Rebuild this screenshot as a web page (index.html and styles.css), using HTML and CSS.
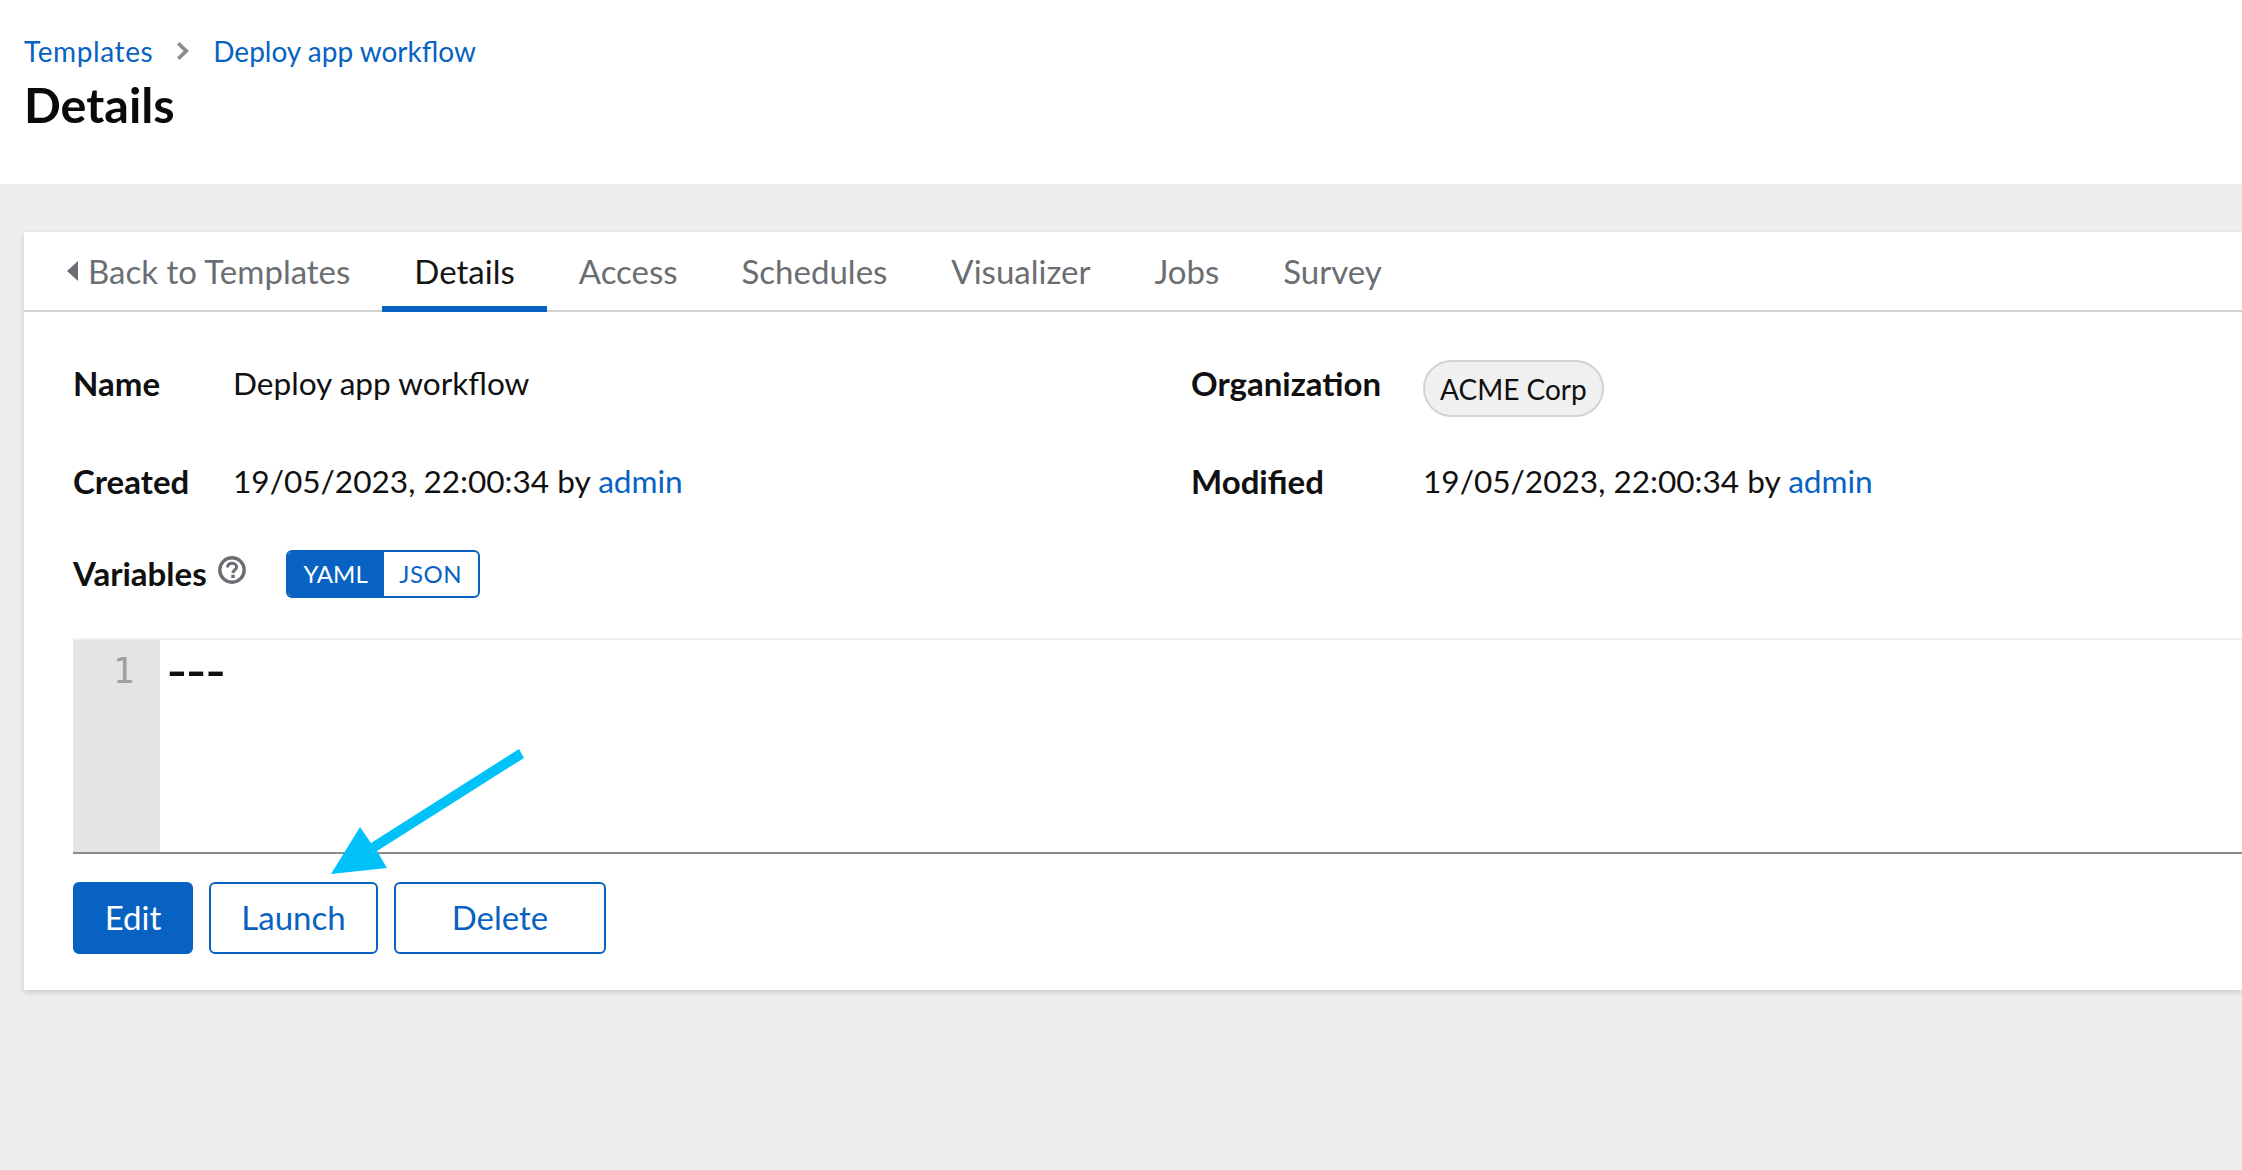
FILE: index.html
```html
<!DOCTYPE html>
<html lang="en">
<head>
    <meta charset="UTF-8">
    <meta name="viewport" content="width=device-width, initial-scale=1.0">
    <title>Details</title>
    <link rel="stylesheet" href="styles.css">
</head>
<body>
    <header class="pageHeader">
        <nav class="crumbs">
            <a class="firstCrumb" href="#">Templates</a>
            <svg class="crumbSep" viewBox="0 0 12 18" width="12" height="18"><path d="M2.5 0 L12 9 L2.5 18 L0 15.4 L6.6 9 L0 2.6 Z" fill="#8a8d90"/></svg>
            <a href="#">Deploy app workflow</a>
        </nav>
        <h1>Details</h1>
    </header>

    <main class="pageMain">
        <section class="card">
            <div class="tabs">
                <a class="tab backTab" href="#"><svg viewBox="0 0 11 20" width="11" height="20"><path d="M11 0 V20 L0 10 Z" fill="#6a6e73"/></svg>Back to Templates</a>
                <a class="tab active" href="#">Details</a>
                <a class="tab" href="#">Access</a>
                <a class="tab" href="#">Schedules</a>
                <a class="tab" href="#">Visualizer</a>
                <a class="tab" href="#">Jobs</a>
                <a class="tab" href="#">Survey</a>
            </div>

            <div class="cardBody">
                <div class="detailGrid">
                    <div class="label">Name</div>
                    <div class="value">Deploy app workflow</div>
                    <div class="label">Organization</div>
                    <div class="value"><span class="chip">ACME Corp</span></div>
                    <div class="label">Created</div>
                    <div class="value">19/05/2023, 22:00:34 by <a href="#">admin</a></div>
                    <div class="label">Modified</div>
                    <div class="value">19/05/2023, 22:00:34 by <a href="#">admin</a></div>
                </div>

                <div class="varsRow">
                    <span class="label">Variables</span>
                    <svg class="helpIcon" viewBox="0 0 28 28" width="28" height="28">
                        <circle cx="14" cy="14" r="12.2" fill="none" stroke="#6a6e73" stroke-width="3.4"/>
                        <path d="M9.6 11.4 C9.6 8.6 11.5 7.2 14 7.2 C16.8 7.2 18.6 8.8 18.6 11 C18.6 14 15 14 15 17" fill="none" stroke="#6a6e73" stroke-width="3"/>
                        <rect x="13.3" y="18.6" width="3.4" height="3.4" fill="#6a6e73"/>
                    </svg>
                    <div class="toggle">
                        <span class="toggleOn">YAML</span>
                        <span class="toggleOff">JSON</span>
                    </div>
                </div>

                <div class="editor">
                    <div class="gutter">1</div>
                    <div class="code">---</div>
                </div>

                <div class="actions">
                    <button class="btn primary editBtn">Edit</button>
                    <button class="btn launchBtn">Launch</button>
                    <button class="btn deleteBtn">Delete</button>
                </div>
            </div>

            <svg class="arrow" viewBox="0 0 200 130" width="200" height="130">
                <path d="M195 0 L200 9 L53 102 L63 119 L7 125 L36 78 L47 94 Z" fill="#00c2f9"/>
            </svg>
        </section>
    </main>
</body>
</html>
```

FILE: styles.css
```css
* {
    box-sizing: border-box;
}
body {
    margin: 0;
    min-height: 1170px;
    background-color: #eeeeee;
    color: #101010;
    font-family: Lato, Arial, sans-serif;
    font-size: 33px;
    overflow: hidden;
}
a {
    color: #0862c2;
    text-decoration: none;
}
.pageHeader {
    height: 184px;
    padding: 31px 24px 0;
    background-color: #fff;
}
.crumbs {
    display: flex;
    align-items: center;
    height: 40px;
    font-size: 28px;
}
.firstCrumb {
    letter-spacing: 0.6px;
}
.crumbSep {
    margin: 0 24px;
}
h1 {
    margin: 3px 0 0;
    font-size: 48.5px;
    font-weight: 700;
    line-height: 60px;
    color: #0a0a0a;
}
.pageMain {
    padding: 48px 0 0 24px;
}
.card {
    position: relative;
    height: 758px;
    background-color: #fff;
    box-shadow: 0 2px 6px rgba(3, 3, 3, 0.16);
}
.tabs {
    display: flex;
    height: 80px;
    border-bottom: 2px solid #d2d2d2;
}
.tab {
    display: flex;
    align-items: center;
    height: 80px;
    padding: 0 32px 2px;
    color: #6a6e73;
    font-size: 33px;
}
.backTab {
    padding-left: 43px;
    padding-right: 32px;
}
.backTab svg {
    margin-right: 10px;
}
.tab.active {
    color: #151515;
    box-shadow: inset 0 -6px 0 #0862c2;
}
.cardBody {
    padding: 48px 0 0 49px;
}
.detailGrid {
    display: grid;
    grid-template-columns: 160px 958px 232px 1fr;
    row-gap: 41px;
}
.label {
    font-weight: 700;
    line-height: 40px;
    padding-top: 3px;
}
.value {
    font-size: 31.6px;
    line-height: 40px;
    padding-top: 3px;
}
.chip {
    display: inline-flex;
    align-items: center;
    height: 57px;
    margin-top: -3px;
    padding: 0 15px;
    border: 2px solid #d2d2d2;
    border-radius: 29px;
    background-color: #f0f0f0;
    font-size: 28px;
}
.varsRow {
    display: flex;
    align-items: center;
    height: 48px;
    margin-top: 49px;
}
.varsRow .label {
    padding: 0 0 3px;
}
.helpIcon {
    margin: -8px 0 0 11px;
}
.toggle {
    display: flex;
    width: 194px;
    height: 48px;
    margin-left: 40px;
    border: 2px solid #0862c2;
    border-radius: 6px;
    overflow: hidden;
    font-size: 24px;
}
.toggleOn,
.toggleOff {
    display: flex;
    align-items: center;
    justify-content: center;
    padding-bottom: 2px;
}
.toggleOn {
    width: 96px;
    background-color: #0862c2;
    color: #fff;
}
.toggleOff {
    flex: 1;
    color: #0862c2;
    letter-spacing: 0.5px;
}
.editor {
    display: flex;
    height: 216px;
    margin-top: 40px;
    border-top: 2px solid #f0f0f0;
    border-bottom: 2px solid #8a8d90;
}
.gutter {
    width: 87px;
    padding: 11px 26px 0 0;
    background-color: #e4e4e4;
    color: #a0a0a0;
    font-family: "DejaVu Sans Mono", monospace;
    font-size: 35px;
    line-height: 40px;
    text-align: right;
}
.code {
    padding: 10px 0 0 0;
    font-family: "DejaVu Sans Mono", monospace;
    font-size: 56px;
    line-height: 40px;
    letter-spacing: -14.4px;
}
.actions {
    display: flex;
    gap: 16px;
    margin-top: 28px;
}
.btn {
    height: 72px;
    padding: 0 0 2px;
    border: 2px solid #0862c2;
    border-radius: 6px;
    background-color: #fff;
    color: #0862c2;
    font-family: inherit;
    font-size: 33px;
}
.primary {
    background-color: #0862c2;
    color: #fff;
}
.editBtn {
    width: 120px;
}
.launchBtn {
    width: 169px;
}
.deleteBtn {
    width: 212px;
}
.arrow {
    position: absolute;
    left: 300px;
    top: 517px;
}
```
